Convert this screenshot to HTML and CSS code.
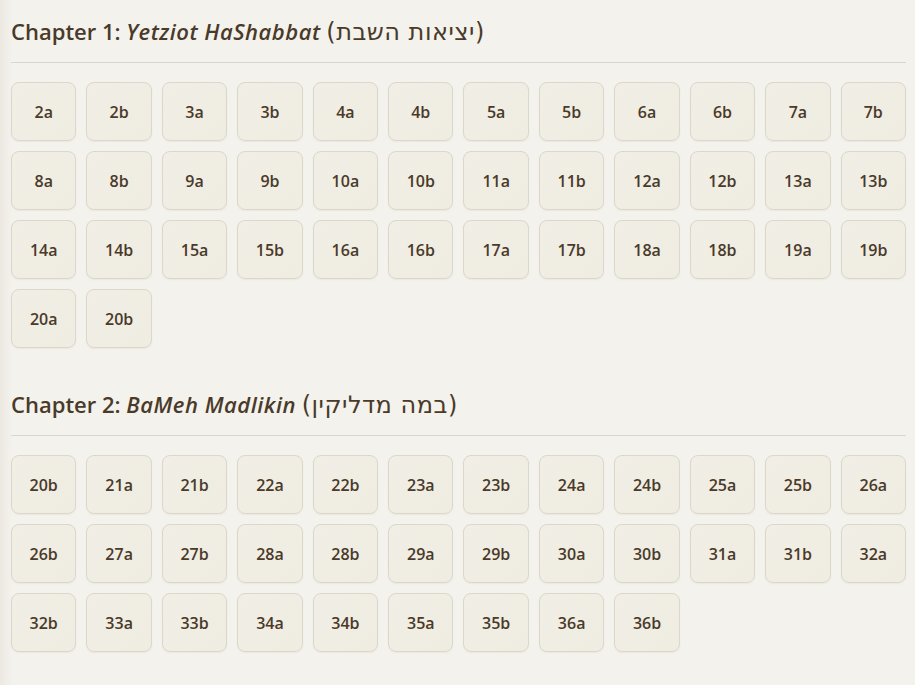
FILE: index.html
```html
<!DOCTYPE html>
<html lang="en">
<head>
<meta charset="utf-8">
<title>Shabbat</title>
<link rel="stylesheet" href="styles.css">
</head>
<body>
<main class="page">
  <section class="chapter">
    <h2 class="chapter-title">Chapter 1: <em>Yetziot HaShabbat</em> <span class="he">(יציאות השבת)</span></h2>
    <div class="grid">
      <a class="daf">2a</a><a class="daf">2b</a><a class="daf">3a</a><a class="daf">3b</a><a class="daf">4a</a><a class="daf">4b</a><a class="daf">5a</a><a class="daf">5b</a><a class="daf">6a</a><a class="daf">6b</a><a class="daf">7a</a><a class="daf">7b</a>
      <a class="daf">8a</a><a class="daf">8b</a><a class="daf">9a</a><a class="daf">9b</a><a class="daf">10a</a><a class="daf">10b</a><a class="daf">11a</a><a class="daf">11b</a><a class="daf">12a</a><a class="daf">12b</a><a class="daf">13a</a><a class="daf">13b</a>
      <a class="daf">14a</a><a class="daf">14b</a><a class="daf">15a</a><a class="daf">15b</a><a class="daf">16a</a><a class="daf">16b</a><a class="daf">17a</a><a class="daf">17b</a><a class="daf">18a</a><a class="daf">18b</a><a class="daf">19a</a><a class="daf">19b</a>
      <a class="daf">20a</a><a class="daf">20b</a>
    </div>
  </section>
  <section class="chapter">
    <h2 class="chapter-title">Chapter 2: <em>BaMeh Madlikin</em> <span class="he">(במה מדליקין)</span></h2>
    <div class="grid">
      <a class="daf">20b</a><a class="daf">21a</a><a class="daf">21b</a><a class="daf">22a</a><a class="daf">22b</a><a class="daf">23a</a><a class="daf">23b</a><a class="daf">24a</a><a class="daf">24b</a><a class="daf">25a</a><a class="daf">25b</a><a class="daf">26a</a>
      <a class="daf">26b</a><a class="daf">27a</a><a class="daf">27b</a><a class="daf">28a</a><a class="daf">28b</a><a class="daf">29a</a><a class="daf">29b</a><a class="daf">30a</a><a class="daf">30b</a><a class="daf">31a</a><a class="daf">31b</a><a class="daf">32a</a>
      <a class="daf">32b</a><a class="daf">33a</a><a class="daf">33b</a><a class="daf">34a</a><a class="daf">34b</a><a class="daf">35a</a><a class="daf">35b</a><a class="daf">36a</a><a class="daf">36b</a>
    </div>
  </section>
</main>
</body>
</html>
```

FILE: styles.css
```css
html, body {
  margin: 0;
  padding: 0;
}

body {
  background-color: #f4f2ed;
  background-image: linear-gradient(to right, rgba(120, 100, 70, 0.07) 0px, rgba(120, 100, 70, 0) 12px);
  background-repeat: no-repeat;
  min-height: 685px;
  font-family: "Open Sans", "Noto Sans", "Liberation Sans", sans-serif;
  color: #4a3a29;
}

.page {
  padding: 16px 9px 20px 11px;
}

.chapter + .chapter {
  margin-top: 41px;
}

.chapter-title {
  margin: 0;
  height: 30px;
  font-size: 22px;
  line-height: 30px;
  font-weight: 600;
  color: #4a3a29;
  padding-bottom: 16px;
  border-bottom: 1px solid #dad6cd;
}

.chapter-title em {
  font-style: italic;
  letter-spacing: 0.5px;
}

.chapter-title .he {
  font-family: "DejaVu Sans", "Open Sans", sans-serif;
  font-weight: 400;
  font-size: 24px;
  line-height: 1;
  letter-spacing: 0.5px;
}

.grid {
  margin-top: 19px;
  display: grid;
  grid-template-columns: repeat(12, 1fr);
  gap: 10px;
}

.daf {
  height: 59px;
  box-sizing: border-box;
  display: flex;
  align-items: center;
  justify-content: center;
  background: linear-gradient(135deg, #f1eee5 0%, #efece2 100%);
  border: 1px solid #dcd7ca;
  border-radius: 8px;
  box-shadow: 0 1px 2px rgba(90, 70, 40, 0.06);
  font-size: 16px;
  font-weight: 600;
  color: #4a3a29;
  cursor: pointer;
}
```
